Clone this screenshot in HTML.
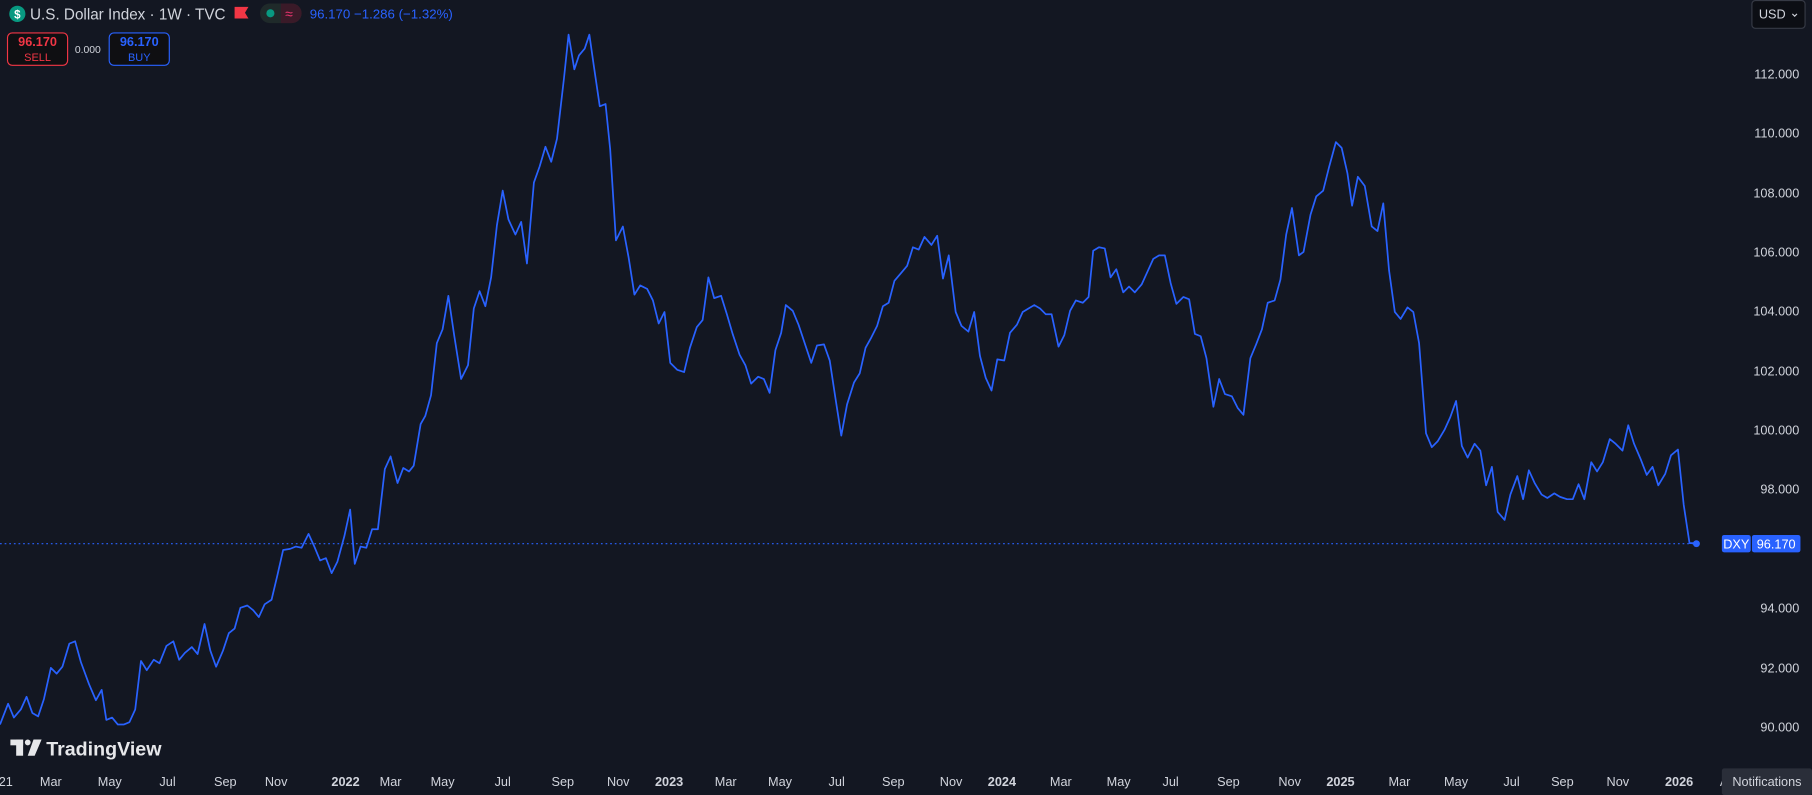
<!DOCTYPE html>
<html><head><meta charset="utf-8"><style>
html,body{margin:0;padding:0;background:#131722;overflow:hidden}
svg{display:block}
text{font-family:"Liberation Sans","DejaVu Sans",sans-serif}
</style></head><body>
<svg width="1812" height="795" viewBox="0 0 1568 688" preserveAspectRatio="none" xmlns="http://www.w3.org/2000/svg">
<rect width="1568" height="688" fill="#131722"/>
<line x1="0" y1="470.5" x2="1468" y2="470.5" stroke="#2962ff" stroke-width="1" stroke-dasharray="1.5,2.5"/>
<polyline fill="none" stroke="#2962ff" stroke-width="1.5" stroke-linejoin="round" points="0,627 7,609 12,621 18,614 23,603 28,617 33,620 38,605 44,578 49,583 54,577 60,557 65,555 70,573 77,592 83,606 88,597 92,623 97,621 102,627 107,627 112,625 117,614 122,572 127,580 133,571 138,574 144,559 150,555 155,571 160,565 166,560 171,566 177,540 182,563 187,577 193,563 198,548 203,544 208,526 214,524 219,528 224,534 229,523 235,519 240,498 245,476 251,475 256,473 261,474 267,462 272,473 277,485 282,483 287,496 292,486 298,464 303,441 307,488 312,473 317,474 322,458 327,458 333,406 338,395 344,418 349,405 354,408 358,403 364,367 368,360 373,342 378,297 383,285 388,256 393,290 399,328 405,316 410,267 415,252 420,265 425,240 430,195 435,165 440,190 446,203 451,192 456,228 462,158 467,144 472,127 477,140 482,120 488,68 492,30 497,60 501,48 506,42 510,30 514,58 519,92 524,90 528,129 533,208 539,196 544,223 549,255 554,247 560,250 565,260 570,280 575,270 580,314 586,320 592,322 597,301 603,283 608,277 613,240 618,258 624,256 629,272 634,289 640,307 645,316 650,332 656,326 661,328 666,340 671,303 676,288 680,264 686,269 691,281 696,296 702,314 707,299 713,298 718,312 723,345 728,377 733,350 739,331 744,323 749,301 754,292 759,282 764,265 769,262 774,243 780,236 785,230 790,214 795,216 800,205 806,212 811,204 816,241 821,221 827,270 832,282 838,287 843,270 848,308 853,327 858,338 863,311 869,312 874,288 880,281 885,270 890,267 895,264 900,267 905,272 910,272 916,300 921,290 926,269 931,260 937,262 942,257 946,217 951,214 956,215 961,240 966,233 972,253 977,248 982,253 988,246 993,235 998,224 1003,221 1008,221 1013,245 1018,263 1024,257 1029,259 1034,289 1039,291 1044,310 1050,352 1055,328 1060,341 1066,343 1071,353 1076,359 1082,310 1087,298 1092,285 1097,262 1103,260 1108,242 1113,203 1118,180 1124,221 1128,218 1134,186 1139,170 1145,165 1150,145 1156,123 1161,128 1166,150 1170,178 1175,153 1181,161 1187,196 1192,200 1197,176 1202,234 1207,270 1212,276 1218,266 1223,270 1228,297 1234,375 1239,387 1244,382 1250,372 1255,361 1260,347 1265,386 1270,396 1276,384 1281,390 1286,420 1291,404 1296,443 1302,450 1307,428 1313,412 1318,432 1323,407 1328,418 1334,428 1339,431 1345,427 1350,430 1356,432 1361,432 1366,419 1371,432 1377,400 1382,408 1387,400 1393,380 1398,384 1404,390 1409,368 1414,384 1420,398 1425,411 1430,404 1435,420 1441,410 1446,394 1452,389 1457,437 1462,470 1468,470"/>
<circle cx="1468" cy="470.5" r="3" fill="#2962ff"/>

<g fill="#d1d4dc" font-size="11" text-anchor="end">
<text x="1557" y="68">112.000</text>
<text x="1557" y="119">110.000</text>
<text x="1557" y="171">108.000</text>
<text x="1557" y="222">106.000</text>
<text x="1557" y="273">104.000</text>
<text x="1557" y="325">102.000</text>
<text x="1557" y="376">100.000</text>
<text x="1557" y="427">98.000</text>
<text x="1557" y="530">94.000</text>
<text x="1557" y="582">92.000</text>
<text x="1557" y="633">90.000</text>
</g>
<rect x="1490" y="463" width="25" height="15" rx="2" fill="#2962ff"/>
<rect x="1516" y="463" width="42" height="15" rx="2" fill="#2962ff"/>
<text x="1502.5" y="474.5" font-size="11" fill="#fff" text-anchor="middle">DXY</text>
<text x="1537" y="474.5" font-size="11" fill="#fff" text-anchor="middle">96.170</text>

<rect x="1516" y="0.5" width="46" height="24" rx="3" fill="#0c0e14" stroke="#363a45"/>
<text x="1522" y="16" font-size="11" fill="#d1d4dc">USD</text>
<path d="M1551 12l2 2 2-2" stroke="#d1d4dc" fill="none" stroke-width="1"/>

<g fill="#d1d4dc" font-size="11" text-anchor="middle">
<text x="5" y="680">21</text><text x="44" y="680">Mar</text><text x="95" y="680">May</text><text x="145" y="680">Jul</text><text x="195" y="680">Sep</text><text x="239" y="680">Nov</text>
<text x="299" y="680" font-weight="bold">2022</text><text x="338" y="680">Mar</text><text x="383" y="680">May</text><text x="435" y="680">Jul</text><text x="487" y="680">Sep</text><text x="535" y="680">Nov</text>
<text x="579" y="680" font-weight="bold">2023</text><text x="628" y="680">Mar</text><text x="675" y="680">May</text><text x="724" y="680">Jul</text><text x="773" y="680">Sep</text><text x="823" y="680">Nov</text>
<text x="867" y="680" font-weight="bold">2024</text><text x="918" y="680">Mar</text><text x="968" y="680">May</text><text x="1013" y="680">Jul</text><text x="1063" y="680">Sep</text><text x="1116" y="680">Nov</text>
<text x="1160" y="680" font-weight="bold">2025</text><text x="1211" y="680">Mar</text><text x="1260" y="680">May</text><text x="1308" y="680">Jul</text><text x="1352" y="680">Sep</text><text x="1400" y="680">Nov</text>
<text x="1453" y="680" font-weight="bold">2026</text><text x="1492" y="680">A</text>
</g>
<rect x="1490" y="665" width="78" height="23" rx="2" fill="#2a2e39"/>
<text x="1529" y="680" font-size="11" fill="#d1d4dc" text-anchor="middle">Notifications</text>

<g fill="#e6e7ea">
<rect x="9" y="640" width="11" height="5"/><rect x="14" y="640" width="6" height="14"/>
<circle cx="24" cy="642.5" r="2.5"/>
<path d="M29 640h7l-6 14h-6z"/>
<text x="40" y="654" font-size="17" font-weight="bold">TradingView</text>
</g>

<circle cx="15" cy="12" r="7" fill="#089981"/>
<text x="15" y="16" font-size="10" font-weight="bold" fill="#fff" text-anchor="middle">$</text>
<text x="26" y="17" font-size="13.2" fill="#d1d4dc">U.S. Dollar Index · 1W · TVC</text>
<path d="M203 6h12l-3 5 3 5h-12z" fill="#f23645"/>
<rect x="225" y="3" width="36" height="17" rx="8.5" fill="#1f2a2a"/>
<path d="M243 3h9.5a8.5 8.5 0 0 1 0 17h-9.5z" fill="#3a1a28"/>
<circle cx="234" cy="11.5" r="3.5" fill="#089981"/>
<text x="250" y="16" font-size="12" fill="#f23672" text-anchor="middle">≈</text>
<text x="268" y="16" font-size="11.5" fill="#2962ff">96.170  −1.286 (−1.32%)</text>

<rect x="6.5" y="28.5" width="52" height="28" rx="4" fill="#0f0f12" stroke="#f23645"/>
<text x="32.5" y="40" font-size="11" font-weight="bold" fill="#f23645" text-anchor="middle">96.170</text>
<text x="32.5" y="53" font-size="9.5" fill="#f23645" text-anchor="middle">SELL</text>
<text x="76" y="46" font-size="9" fill="#d1d4dc" text-anchor="middle">0.000</text>
<rect x="94.5" y="28.5" width="52" height="28" rx="4" fill="#0f0f12" stroke="#2962ff"/>
<text x="120.5" y="40" font-size="11" font-weight="bold" fill="#2962ff" text-anchor="middle">96.170</text>
<text x="120.5" y="53" font-size="9.5" fill="#2962ff" text-anchor="middle">BUY</text>
</svg>
</body></html>
